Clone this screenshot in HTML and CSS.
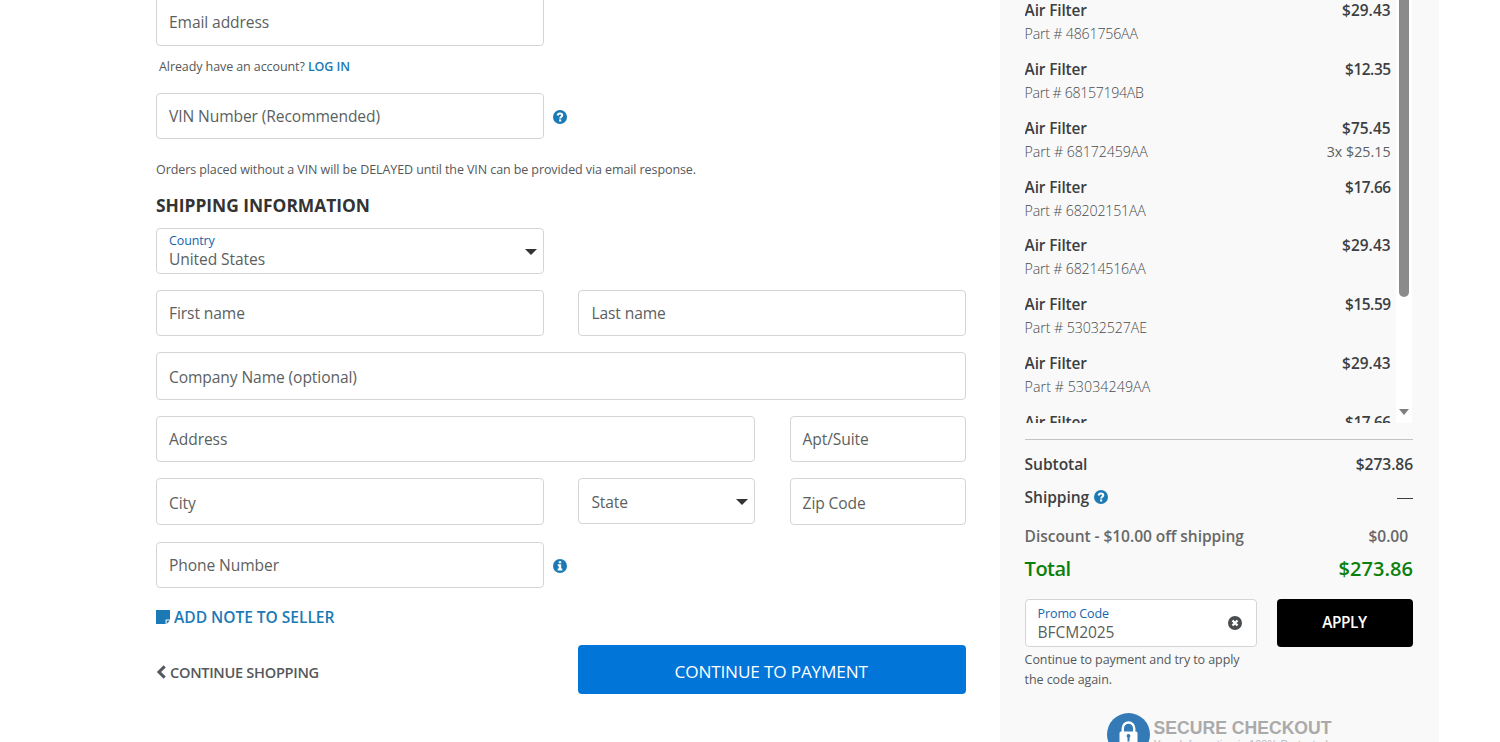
FILE: index.html
```
<!DOCTYPE html>
<html lang="en">
<head>
<meta charset="utf-8">
<title>Checkout</title>
<link rel="stylesheet" href="styles.css">
</head>
<body>
<svg width="0" height="0" class="defs" aria-hidden="true">
  <symbol id="question" viewBox="0 0 14 14"><circle cx="7" cy="7" r="7" fill="#1b7ab5"/><path d="M4.6 5.5C4.8 4.1 5.7 3.4 7 3.4s2.3.7 2.3 1.9c0 1.5-2.1 1.5-2.1 3.1" fill="none" stroke="#fff" stroke-width="2"/><rect x="6.1" y="9.4" width="2.1" height="2.1" fill="#fff"/></symbol>
  <symbol id="info" viewBox="0 0 14 14"><circle cx="7" cy="7" r="7" fill="#1b7ab5"/><path d="M5.8 2.2h2.4v2.1H5.8zM4.8 5.3h3.4v4.3h1.1v1.9H4.7V9.6h1.1V7.2h-1z" fill="#fff"/></symbol>
</svg>
<div class="page">
  <main class="form">
    <div class="row email"><div class="field half"><span>Email address</span></div></div>
    <p class="account"><span>Already have an account?</span> <a>LOG IN</a></p>
    <div class="row vin"><div class="field half"><span>VIN Number (Recommended)</span></div><svg class="hint"><use href="#question"/></svg></div>
    <p class="notice"><span>Orders placed without a VIN will be DELAYED until the VIN can be provided via email response.</span></p>
    <h2 class="heading"><span>SHIPPING INFORMATION</span></h2>
    <div class="row country"><div class="field half stacked select"><label>Country</label><span>United States</span></div></div>
    <div class="row names"><div class="field half"><span>First name</span></div><div class="field half"><span>Last name</span></div></div>
    <div class="row company"><div class="field full"><span>Company Name (optional)</span></div></div>
    <div class="row address"><div class="field wide"><span>Address</span></div><div class="field"><span>Apt/Suite</span></div></div>
    <div class="row city"><div class="field half"><span>City</span></div><div class="field select short"><span>State</span></div><div class="field"><span>Zip Code</span></div></div>
    <div class="row phone"><div class="field half"><span>Phone Number</span></div><svg class="hint"><use href="#info"/></svg></div>
    <a class="note"><svg class="note-icon" viewBox="0 0 14 14"><path d="M0 0h14v9.6H9.6V14H0z" fill="#1b7ab5"/><path d="M10.6 10.6H14L10.6 14z" fill="#1b7ab5"/></svg><span>ADD NOTE TO SELLER</span></a>
    <div class="row actions">
      <a class="back"><svg class="back-icon" viewBox="0 0 10 14"><path d="M8.7 1.4 3 7l5.7 5.6" fill="none" stroke="#55585a" stroke-width="3"/></svg><span>CONTINUE SHOPPING</span></a>
      <div class="pay"><span>CONTINUE TO PAYMENT</span></div>
    </div>
  </main>
  <aside class="summary">
    <div class="cart">
      <div class="items">
        <div class="item"><div class="line"><b>Air Filter</b><b class="price">$29.43</b></div><div class="part"><i class="close">Part # 4861756AA</i></div></div>
        <div class="item"><div class="line"><b>Air Filter</b><b class="price narrow">$12.35</b></div><div class="part"><i class="closer">Part # 68157194AB</i></div></div>
        <div class="item"><div class="line"><b>Air Filter</b><b class="price">$75.45</b></div><div class="part"><i>Part # 68172459AA</i><em>3x $25.15</em></div></div>
        <div class="item"><div class="line"><b>Air Filter</b><b class="price narrow">$17.66</b></div><div class="part"><i class="close">Part # 68202151AA</i></div></div>
        <div class="item"><div class="line"><b>Air Filter</b><b class="price">$29.43</b></div><div class="part"><i class="close">Part # 68214516AA</i></div></div>
        <div class="item"><div class="line"><b>Air Filter</b><b class="price narrow">$15.59</b></div><div class="part"><i>Part # 53032527AE</i></div></div>
        <div class="item"><div class="line"><b>Air Filter</b><b class="price">$29.43</b></div><div class="part"><i class="loose">Part # 53034249AA</i></div></div>
        <div class="item"><div class="line"><b>Air Filter</b><b class="price narrow">$17.66</b></div></div>
      </div>
      <div class="track"><div class="thumb"></div><div class="down"></div></div>
    </div>
    <div class="total-row subtotal"><span>Subtotal</span><span>$273.86</span></div>
    <div class="total-row shipping"><span>Shipping</span><svg class="ship-hint"><use href="#question"/></svg><div class="dash"></div></div>
    <div class="total-row discount"><span>Discount - $10.00 off shipping</span><span>$0.00</span></div>
    <div class="total-row total"><span>Total</span><span class="sum">$273.86</span></div>
    <div class="promo">
      <div class="field stacked code"><label>Promo Code</label><span>BFCM2025</span><svg class="clear" viewBox="0 0 14 14"><circle cx="7" cy="7" r="7" fill="#4a4d4f"/><path d="M4.5 4.5l5 5m0-5l-5 5" stroke="#fff" stroke-width="2.4"/></svg></div>
      <div class="apply"><span>APPLY</span></div>
    </div>
    <p class="help"><span>Continue to payment and try to apply</span><br><span>the code again.</span></p>
    <div class="secure">
      <svg class="badge" viewBox="0 0 43 43"><circle cx="21.5" cy="21.5" r="21.5" fill="#337ab7"/><path d="M15.8 20v-4.8a5.7 5.7 0 0 1 11.4 0V20" fill="none" stroke="#fff" stroke-width="2.4"/><rect x="12.5" y="18.5" width="18" height="15" rx="1.5" fill="#fff"/><path d="M21.5 21a1.9 1.9 0 0 1 1 3.5v4h-2v-4a1.9 1.9 0 0 1 1-3.5z" fill="#337ab7"/></svg>
      <div class="secure-text"><div class="secure-title"><span>SECURE CHECKOUT</span></div><div class="secure-sub"><span>Your Information is 100% Protected</span></div></div>
    </div>
  </aside>
</div>
</body>
</html>
```
FILE: styles.css
```
* { box-sizing: border-box; }
body { margin: 0; background: #fff; color: #55585a; font: 16px/22px "Open Sans", "Noto Sans", sans-serif; height: 742px; overflow: hidden; }
p, h2 { margin: 0; }
i, em { font-style: normal; }
.defs { position: absolute; }
.page { display: flex; height: 742px; }
.form { flex: none; width: 1000px; padding-left: 156px; }
.row { display: grid; grid-template-columns: repeat(4, 176.4px); column-gap: 34.8px; width: 811px; }
.field { border: 1px solid #d5d5d5; border-radius: 4px; background: #fff; height: 46px; padding-left: 12px; display: flex; align-items: center; color: #5c5f61; font-size: 15.6px; letter-spacing: -.1px; }
.half { grid-column: span 2; }
.wide { grid-column: span 3; }
.full { grid-column: span 4; }
.hint { width: 14px; height: 14px; margin-left: -25px; align-self: center; margin-top: 2px; }
.stacked { flex-direction: column; align-items: flex-start; position: relative; }
.stacked label { font-size: 12.5px; line-height: 17px; color: #1565ae; margin-top: 3px; letter-spacing: -.12px; }
.stacked span { line-height: 20px; }
.select { position: relative; }
.select::after { content: ""; position: absolute; right: 6px; top: 20px; border: 6px solid transparent; border-top-color: #333; border-bottom: 0; }
.email .field { height: 55.5px; margin-top: -10px; padding-top: 9px; }
.account { font-size: 12.5px; line-height: 20px; margin: 11px 0 16px 3px; height: 20.5px; letter-spacing: -.09px; }
.account a { color: #1b7ab5; font-weight: 600; }
.notice { font-size: 12.5px; line-height: 20px; margin-top: 21px; height: 20px; letter-spacing: -.09px; }
.heading { font-size: 17.4px; line-height: 24px; margin-top: 13px; margin-bottom: 11px; font-weight: 700; color: #333; letter-spacing: -.03px; }
.names { margin-top: 16px; }
.company { margin-top: 16px; }
.company .field { height: 48px; padding-top: 1px; }
.address { margin-top: 16px; }
.city { margin-top: 16px; }
.city .field { height: 47px; padding-top: 2px; }
.city .short { height: 46px; }
.phone { margin-top: 17px; }
.note { display: flex; align-items: center; margin-top: 18px; height: 22px; color: #1b7ab5; font-weight: 600; font-size: 15.6px; letter-spacing: -.05px; }
.note-icon { width: 14px; height: 14px; margin-right: 4px; }
.actions { margin-top: 17px; }
.back { grid-column: span 2; display: flex; align-items: center; height: 54px; color: #55585a; font-weight: 600; font-size: 14.6px; letter-spacing: -.3px; }
.back-icon { width: 10px; height: 14px; margin-right: 4px; }
.pay { grid-column: span 2; height: 49px; background: #0275d8; border-radius: 4px; color: #fff; font-size: 17.2px; letter-spacing: -.17px; display: flex; align-items: center; justify-content: center; padding: 4px 2px 0 0; }
.summary { width: 439px; background: #f9f9f9; padding: 0 26px 0 24.6px; overflow: hidden; }
.cart { height: 423px; display: flex; overflow: hidden; }
.items { width: 366px; }
.item { height: 58.85px; }
.line, .part { display: flex; justify-content: space-between; }
.line { line-height: 21px; height: 20px; color: #3c3f41; }
.line b { font-weight: 600; font-size: 15.4px; letter-spacing: -.13px; }
.line .price { letter-spacing: .05px; }
.line .narrow { letter-spacing: -.45px; }
.part { line-height: 27px; font-size: 14.2px; font-weight: 300; color: #484b4d; }
.part i { letter-spacing: -.08px; }
.part .close { letter-spacing: -.2px; }
.part .closer { letter-spacing: -.35px; }
.part .loose { letter-spacing: .07px; }
.part em { font-weight: 400; color: #5c5f61; letter-spacing: .05px; }
.track { width: 16px; margin-left: 5.4px; background: #fff; position: relative; }
.thumb { width: 10px; height: 297px; margin: 0 auto; background: #8b8b8b; border-radius: 0 0 5px 5px; }
.down { margin: 112px auto 0; width: 10px; height: 6px; background: #7f7f7f; clip-path: polygon(0 0, 100% 0, 50% 100%); }
.total-row { display: flex; justify-content: space-between; align-items: center; height: 22px; font-weight: 600; font-size: 15.6px; letter-spacing: -.08px; color: #3c3f41; }
.subtotal { border-top: 1px solid #c3c3c3; height: 37px; padding-top: 12px; margin-top: 16px; }
.shipping { margin-top: 10px; }
.ship-hint { width: 14px; height: 14px; margin: 0 auto 0 5px; }
.dash { width: 16px; height: 1px; background: #3c3f41; margin-top: 2px; }
.discount { margin-top: 17px; color: #686868; padding-right: 5px; }
.total { margin-top: 7px; height: 30px; font-size: 20px; color: #0b800b; letter-spacing: -.5px; }
.total .sum { letter-spacing: .07px; }
.promo { display: flex; justify-content: space-between; margin-top: 15px; }
.code { width: 232px; height: 48px; }
.code label { margin-top: 5px; }
.clear { position: absolute; right: 14px; top: 16px; width: 14px; height: 14px; }
.apply { width: 136px; height: 48px; border-radius: 4px; background: #000; color: #fff; font-weight: 600; font-size: 15.4px; letter-spacing: -.4px; display: flex; align-items: center; justify-content: center; padding-right: 1px; }
.help { font-size: 12.5px; line-height: 19.5px; margin-top: 3px; letter-spacing: -.08px; }
.secure { display: flex; margin: 24px 0 0 82px; }
.badge { width: 43px; height: 43px; flex: none; }
.secure-text { margin-left: 4px; font-family: "Liberation Sans", sans-serif; color: #aaa; white-space: nowrap; }
.secure-title { font-size: 17.6px; font-weight: 700; line-height: 20px; margin-top: 5px; }
.secure-sub { font-size: 11px; line-height: 12px; color: #bbb; letter-spacing: .05px; }
```
